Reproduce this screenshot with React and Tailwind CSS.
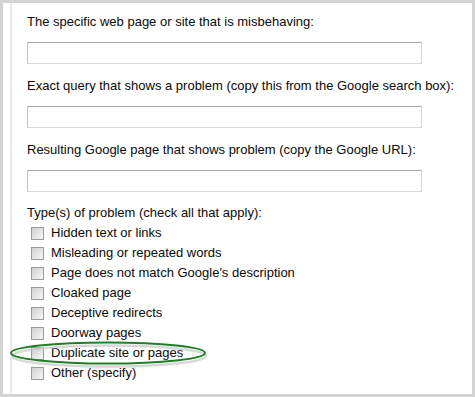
import React from "react";

const problems = [
  "Hidden text or links",
  "Misleading or repeated words",
  "Page does not match Google's description",
  "Cloaked page",
  "Deceptive redirects",
  "Doorway pages",
  "Duplicate site or pages",
  "Other (specify)",
];

const Field = ({ label, first }) => (
  <div className={first ? "" : "mt-[14px]"}>
    <div className="h-4 leading-4">{label}</div>
    <div className="mt-3 h-[22px] w-[395px] border border-[#d6d6d6] border-t-[#a9a9a9] border-l-[#c4c4c4] bg-white" />
  </div>
);

const Box = () => (
  <span className="block h-[13px] w-[13px] border border-[#9a9a9a] bg-gradient-to-br from-[#cfcfcf] to-[#f7f7f7]" />
);

export default function App() {
  return (
    <div
      className="h-[397px] w-[475px] bg-[#d4d4d4] p-[3px] text-[13px] text-[#0a0a0a]"
      style={{ fontFamily: '"Liberation Sans", Arial, sans-serif' }}
    >
      <div className="relative flex h-full bg-white">
        {/* left strip */}
        <div className="ml-[7px] w-[2px] bg-[#e6eaf3]" />

        <div className="pl-[15px] pt-[11px]">
          <Field first label="The specific web page or site that is misbehaving:" />
          <Field label="Exact query that shows a problem (copy this from the Google search box):" />
          <Field label="Resulting Google page that shows problem (copy the Google URL):" />

          <div className="mt-[13px] h-4 leading-4">Type(s) of problem (check all that apply):</div>
          <div className="mt-[2px] flex flex-col">
            {problems.map((p) => (
              <div key={p} className="flex h-5 items-center">
                <span className="ml-1">
                  <Box />
                </span>
                <span className="ml-[7px]">{p}</span>
              </div>
            ))}
          </div>
        </div>

        {/* highlight ellipse */}
        <svg
          className="pointer-events-none absolute left-[3px] top-[334px]"
          width="206"
          height="34"
          viewBox="0 0 206 34"
        >
          <ellipse cx="103" cy="19" rx="97" ry="10.5" fill="none" stroke="#c8c8c8" strokeWidth="2.5" opacity="0.7" />
          <ellipse cx="102" cy="16" rx="97" ry="10.5" fill="none" stroke="#1f7f26" strokeWidth="2" />
        </svg>
      </div>
    </div>
  );
}
